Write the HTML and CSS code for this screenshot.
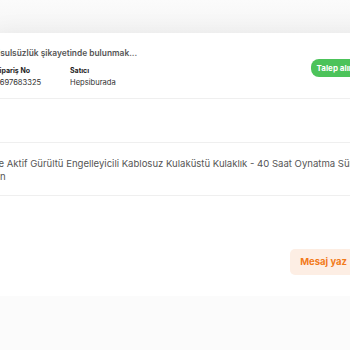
FILE: index.html
```html
<!DOCTYPE html>
<html lang="tr">
<head>
  <meta charset="UTF-8">
  <meta name="viewport" content="width=device-width, initial-scale=1.0">
  <title>Sipariş Detayı</title>
  <link rel="stylesheet" href="styles.css">
</head>
<body>

  <div class="page">
    <div class="card">

      <!-- Order header -->
      <div class="order-head">
        <div class="order-info">
          <h3 class="order-title">Usulsüzlük şikayetinde bulunmak...</h3>
          <div class="order-meta">
            <div class="meta-col">
              <div class="meta-label">Sipariş No</div>
              <div class="meta-value">3697683325</div>
            </div>
            <div class="meta-col">
              <div class="meta-label">Satıcı</div>
              <div class="meta-value">Hepsiburada</div>
            </div>
          </div>
        </div>
        <span class="status">Talep alındı</span>
      </div>

      <div class="blank-row"></div>

      <!-- Product -->
      <div class="product">
        <p class="product-name">Bluetooth 5.3 ve Aktif Gürültü Engelleyicili Kablosuz Kulaküstü Kulaklık - 40 Saat Oynatma Süresi ve Hızlı Şarj<br>Uzun</p>
      </div>

      <!-- Actions -->
      <div class="actions">
        <button class="msg-btn">Mesaj yaz</button>
      </div>

    </div>
  </div>

</body>
</html>
```

FILE: styles.css
```css
body {
  margin: 0;
  background-color: #fbfbfb;
  font-family: Inter, 'Noto Sans', sans-serif;
  overflow: hidden;
}
.page {
  width: 420px;
  margin-left: -6px;
  padding-top: 33px;
  background: linear-gradient(#fbfbfb, #f5f5f5 33px, #fbfbfb 33px);
}
.card {
  background-color: #fff;
  box-shadow: 0 0 24px rgba(0, 0, 0, 0.06);
}
.order-head {
  display: flex;
  justify-content: space-between;
  align-items: center;
  padding: 15px 0 11px 0;
  border-bottom: 1px solid #efefef;
}
.order-title {
  margin: 0 0 8px 0;
  font-size: 8.4px;
  font-weight: 600;
  color: #555;
}
.order-meta {
  display: flex;
  padding-left: 1px;
}
.meta-col {
  width: 75px;
}
.meta-label {
  font-size: 7px;
  font-weight: 700;
  color: #222;
  margin-bottom: 3px;
}
.meta-value {
  font-size: 7.6px;
  color: #333;
}
.status {
  margin-right: 47px;
  background-color: #4cc35a;
  color: #fff;
  font-size: 8px;
  font-weight: 700;
  padding: 4px 6px;
  border-radius: 8px;
}
.blank-row {
  height: 43px;
  border-bottom: 1px solid #efefef;
}
.product {
  height: 53px;
  padding-top: 14px;
  box-sizing: border-box;
  border-bottom: 1px solid #efefef;
  overflow: hidden;
}
.product-name {
  margin: 0 0 0 -12px;
  text-indent: -51px;
  white-space: nowrap;
  font-size: 9.55px;
  line-height: 13px;
  color: #555;
}
.actions {
  height: 100px;
  box-sizing: border-box;
  display: flex;
  justify-content: flex-end;
  align-items: flex-start;
  padding: 53px 57px 0 0;
}
.msg-btn {
  background-color: #fdeee4;
  color: #f27a1a;
  border: none;
  border-radius: 5px;
  font-family: inherit;
  font-size: 9.5px;
  font-weight: 700;
  padding: 7px 10px 8px;
}
```
